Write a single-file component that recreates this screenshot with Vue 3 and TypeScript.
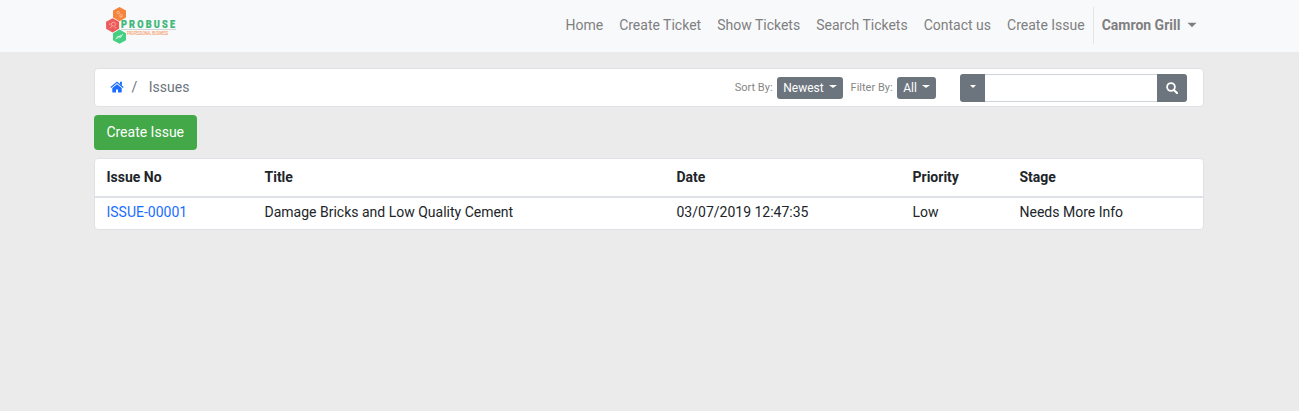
<script setup lang="ts">
interface Issue {
  no: string
  title: string
  date: string
  priority: string
  stage: string
}

const links: string[] = ['Home', 'Create Ticket', 'Show Tickets', 'Search Tickets', 'Contact us', 'Create Issue']
const issues: Issue[] = [
  {
    no: 'ISSUE-00001',
    title: 'Damage Bricks and Low Quality Cement',
    date: '03/07/2019 12:47:35',
    priority: 'Low',
    stage: 'Needs More Info',
  },
]
</script>

<template>
  <div class="page">
    <header class="navbar">
      <div class="container nav-inner">
        <a class="brand">
          <svg width="72" height="40" viewBox="0 0 72 40">
            <polygon points="14.5,1 21,4.6 21,11.6 14.5,15.2 8,11.6 8,4.6" fill="#f5843c" />
            <polygon points="7.6,12.2 14.1,15.8 14.1,22.8 7.6,26.4 1.1,22.8 1.1,15.8" fill="#ee5a5a" />
            <polygon points="14.5,23.6 21,27.2 21,34.2 14.5,37.8 8,34.2 8,27.2" fill="#45cf80" />
            <g fill="none" stroke="#fff" stroke-width="0.9" opacity="0.5">
              <circle cx="13.3" cy="6.6" r="1.2" />
              <circle cx="16" cy="9.8" r="1.3" />
              <circle cx="8.4" cy="18.2" r="2" />
              <path d="M7 20.2 4.8 22.2M4.8 17.2v2M9.5 21.8h1.8" />
            </g>
            <path d="M10.6 33 18 28.4M11.6 31.2l4-1.4M14.5 32.4l2-2.4" fill="none" stroke="#fff" stroke-width="1" opacity="0.75" />
            <g transform="translate(16 22.1) scale(0.88 1)">
              <text class="logo-name" x="0" y="0" textLength="61.5" lengthAdjust="spacing">PROBUSE</text>
            </g>
            <rect x="16" y="23" width="55" height="1" fill="#cdd5d5" />
            <text class="logo-tag" x="22" y="29.2" textLength="41" lengthAdjust="spacingAndGlyphs">PROFESSIONAL BUSINESS</text>
          </svg>
        </a>
        <nav class="links">
          <a v-for="link in links" :key="link" class="link">{{ link }}</a>
          <span class="divider"></span>
          <a class="link user">Camron Grill<i class="caret"></i></a>
        </nav>
      </div>
    </header>

    <main class="container">
      <div class="toolbar">
        <div class="crumbs">
          <svg class="home" width="14" height="12" viewBox="0 0 14 12">
            <path d="M7 3.2 2.3 7V11c0 .3.2.5.5.5h3.2V8.4h2v3.1h3.2c.3 0 .5-.2.5-.5V7Z" />
            <path d="M.8 6.5 7 1.3l6.2 5.2" fill="none" stroke="#1a6dff" stroke-width="1.2" />
            <path d="M10 .8h1.9v4L10 3.2Z" />
          </svg>
          <span class="slash">/</span>
          <span class="current">Issues</span>
        </div>
        <div class="tools">
          <span class="label">Sort By:</span>
          <button class="pill newest">Newest<i class="caret"></i></button>
          <span class="label filter">Filter By:</span>
          <button class="pill all">All<i class="caret"></i></button>
          <div class="search">
            <button class="scope" aria-label="Search scope"><i class="caret"></i></button>
            <input type="text" aria-label="Search" />
            <button class="go" aria-label="Search">
              <svg width="12" height="12" viewBox="0 0 12 12">
                <circle cx="5" cy="5" r="3.9" fill="none" stroke="#fff" stroke-width="1.8" />
                <path d="M7.9 7.9 11 11" stroke="#fff" stroke-width="2.1" stroke-linecap="round" />
              </svg>
            </button>
          </div>
        </div>
      </div>

      <button class="create">Create Issue</button>

      <div class="card">
        <table>
          <colgroup>
            <col class="c-no" />
            <col class="c-title" />
            <col class="c-date" />
            <col class="c-priority" />
            <col />
          </colgroup>
          <thead>
            <tr>
              <th>Issue No</th>
              <th>Title</th>
              <th>Date</th>
              <th>Priority</th>
              <th>Stage</th>
            </tr>
          </thead>
          <tbody>
            <tr v-for="issue in issues" :key="issue.no">
              <td><a class="issue-link">{{ issue.no }}</a></td>
              <td>{{ issue.title }}</td>
              <td>{{ issue.date }}</td>
              <td>{{ issue.priority }}</td>
              <td>{{ issue.stage }}</td>
            </tr>
          </tbody>
        </table>
      </div>
    </main>
  </div>
</template>

<style>
body {
  margin: 0;
  background: #ebebeb;
}
</style>

<style scoped>
.page {
  min-height: 411px;
  background: #ebebeb;
  color: #212529;
  font-family: Roboto, 'Liberation Sans', sans-serif;
  font-size: 14px;
  line-height: 21px;
}
.page *,
.page {
  box-sizing: border-box;
}
button,
input {
  margin: 0;
  padding: 0;
  border: 0;
  font: inherit;
}
.container {
  width: 1110px;
  margin-left: 94px;
}
.navbar {
  height: 52px;
  background: #f8f9fb;
}
.nav-inner {
  display: flex;
  justify-content: space-between;
  height: 52px;
}
.brand {
  margin: 6px 0 0 11px;
}
.brand svg {
  display: block;
  overflow: visible;
}
.logo-name {
  fill: #3fb87a;
  stroke: #3fb87a;
  stroke-width: 0.2;
  font-family: Roboto, sans-serif;
  font-size: 10.4px;
  font-weight: 900;
}
.logo-tag {
  fill: #f5843c;
  font-family: Roboto, sans-serif;
  font-size: 4.6px;
}
.links {
  display: flex;
  align-items: center;
  height: 50px;
}
.link {
  padding: 0 8px;
  color: #7f7f80;
  white-space: nowrap;
}
.divider {
  align-self: flex-start;
  width: 1px;
  height: 37px;
  margin-top: 7px;
  background: #e3e5e8;
}
.user {
  font-weight: 700;
}
.caret {
  display: inline-block;
  width: 0;
  height: 0;
  border-top: 4px solid currentColor;
  border-right: 4px solid transparent;
  border-left: 4px solid transparent;
}
.user .caret {
  margin-left: 7.6px;
  transform: scale(1.12);
  vertical-align: 3px;
}
.toolbar {
  display: flex;
  align-items: center;
  justify-content: space-between;
  height: 39px;
  margin-top: 16px;
  padding: 0 16px;
  border: 1px solid #dee2e6;
  border-radius: 4px;
  background: #fff;
}
.crumbs {
  display: flex;
  align-items: center;
  padding-bottom: 1px;
  color: #6c757d;
}
.home {
  margin-left: -1px;
  fill: #1a6dff;
}
.slash {
  margin-left: 7.5px;
}
.current {
  margin-left: 11.5px;
}
.tools {
  display: flex;
  align-items: center;
  padding-top: 1px;
}
.label {
  margin-right: 4.4px;
  padding-bottom: 2px;
  color: #868686;
  font-size: 11px;
}
.filter {
  margin-left: 7.6px;
}
.pill {
  height: 22px;
  border-radius: 3px;
  background: #6c757d;
  color: #fff;
  font-size: 12px;
  line-height: 22px;
  white-space: nowrap;
}
.newest {
  width: 66px;
}
.all {
  width: 39px;
}
.pill .caret {
  margin-left: 5px;
  border-top-width: 3px;
  vertical-align: 4px;
}
.search {
  display: flex;
  width: 227px;
  height: 28px;
  margin-left: 24px;
}
.scope {
  display: flex;
  align-items: center;
  justify-content: center;
  width: 25px;
  padding-bottom: 4px;
  border-radius: 3px 0 0 3px;
  background: #6c757d;
  color: #fff;
}
.scope .caret {
  border-top-width: 3px;
  border-right-width: 3px;
  border-left-width: 3px;
}
.search input {
  flex: 1;
  min-width: 0;
  border-top: 1px solid #ced4da;
  border-bottom: 1px solid #ced4da;
  background: #fff;
}
.go {
  display: flex;
  align-items: center;
  justify-content: center;
  width: 30px;
  border-radius: 0 3px 3px 0;
  background: #6c757d;
}
.create {
  display: block;
  width: 103px;
  height: 35px;
  margin: 8px 0;
  padding-right: 0.6px;
  border-radius: 4px;
  background: #43a847;
  color: #fff;
}
.card {
  height: 72px;
  border: 1px solid #dee2e6;
  border-radius: 4px;
  background: #fff;
}
table {
  width: 100%;
  border-spacing: 0;
  table-layout: fixed;
}
.c-no {
  width: 157.5px;
}
.c-title {
  width: 412px;
}
.c-date {
  width: 236px;
}
.c-priority {
  width: 107px;
}
th,
td {
  padding: 0 12px;
  text-align: left;
}
th:first-child,
td:first-child {
  padding-left: 11.5px;
}
th {
  height: 39px;
  padding-bottom: 1px;
  border-bottom: 2px solid #dee2e6;
  font-weight: 700;
}
td {
  height: 29px;
}
.issue-link {
  color: #1a6dff;
}
</style>
